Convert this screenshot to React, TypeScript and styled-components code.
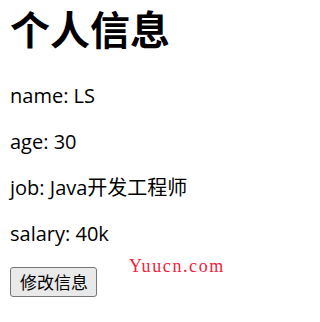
import React from "react";
import styled, { createGlobalStyle } from "styled-components";

const GlobalStyle = createGlobalStyle`
  html, body {
    margin: 0;
    padding: 0;
    background: #ffffff;
  }
  body {
    font-family: "Open Sans", "Noto Sans CJK SC", sans-serif;
    color: #000000;
  }
`;

const Page = styled.div`
  position: relative;
  width: 240px;
  height: 322px;
  padding: 2px 10px 0;
  box-sizing: border-box;
  display: flex;
  flex-direction: column;
  align-items: flex-start;
`;

const Title = styled.h1`
  margin: 0 0 29px;
  font-family: "Noto Sans CJK SC", sans-serif;
  font-size: 40px;
  font-weight: 700;
  line-height: 52px;
`;

const InfoLine = styled.p`
  margin: 0 0 20px;
  font-size: 20px;
  line-height: 26px;
`;

const EditButton = styled.button`
  height: 30px;
  padding: 0 8px 0 9px;
  font-family: "Noto Sans CJK SC", sans-serif;
  font-size: 17px;
  line-height: 24px;
  color: #000000;
  background: #e9e9e9;
  border: 1px solid #767676;
  border-radius: 3px;
`;

const Watermark = styled.span`
  position: absolute;
  left: 129px;
  top: 256px;
  font-family: "Liberation Serif", serif;
  font-size: 18px;
  letter-spacing: 1.6px;
  color: #f5203a;
`;

const person = [
  { label: "name", value: "LS" },
  { label: "age", value: "30" },
  { label: "job", value: "Java开发工程师" },
  { label: "salary", value: "40k" },
];

export default function App() {
  return (
    <>
      <GlobalStyle />
      <Page>
        <Title>个人信息</Title>
        {person.map((item) => (
          <InfoLine key={item.label}>
            {item.label}: {item.value}
          </InfoLine>
        ))}
        <EditButton>修改信息</EditButton>
        <Watermark>Yuucn.com</Watermark>
      </Page>
    </>
  );
}
